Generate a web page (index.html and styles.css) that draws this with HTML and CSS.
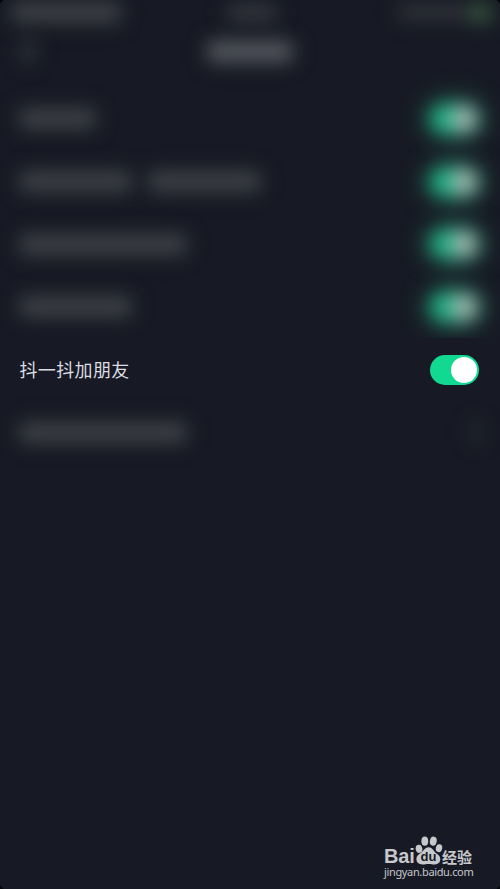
FILE: index.html
```html
<!DOCTYPE html>
<html lang="zh-CN">
<head>
<meta charset="utf-8">
<title>抖一抖加朋友</title>
<link rel="stylesheet" href="styles.css">
</head>
<body>
<main class="screen">
  <header class="status soft">
    <i class="smudge status-left"></i>
    <i class="smudge status-time"></i>
    <span class="status-right"><i class="smudge status-icons"></i><i class="smudge battery"></i></span>
  </header>
  <nav class="nav soft">
    <i class="smudge back"></i>
    <i class="smudge title"></i>
    <i class="back"></i>
  </nav>
  <section class="settings">
    <div class="row soft"><span class="label"><i class="smudge w-75"></i></span><span class="toggle"></span></div>
    <div class="row soft"><span class="label"><i class="smudge w-110"></i><i class="smudge w-110"></i></span><span class="toggle"></span></div>
    <div class="row soft"><span class="label"><i class="smudge w-165"></i></span><span class="toggle"></span></div>
    <div class="row soft"><span class="label"><i class="smudge w-110"></i></span><span class="toggle"></span></div>
    <div class="row focus"><span class="focus-label">抖一抖加朋友</span><span class="toggle"></span></div>
    <div class="row soft"><span class="label"><i class="smudge w-165"></i></span><i class="smudge chevron"></i></div>
  </section>
  <footer class="watermark">
    <div class="brand">
      <span class="bai">Bai</span>
      <span class="paw">
        <svg viewBox="0 0 28 29" width="28" height="29" aria-hidden="true">
          <ellipse cx="4" cy="12.8" rx="3.3" ry="4.1" transform="rotate(-12 4 12.8)"/>
          <ellipse cx="9.8" cy="5.2" rx="3.4" ry="4.6"/>
          <ellipse cx="18.3" cy="5.2" rx="3.4" ry="4.6" transform="rotate(10 18.3 5.2)"/>
          <ellipse cx="24" cy="12.2" rx="3.2" ry="4" transform="rotate(12 24 12.2)"/>
          <path d="M13.6 11.2c3.6 0 4.7 3.3 7 5.5 2.5 2 4.7 3.1 4.7 6.4 0 3.5-2.2 5.3-5.5 5.3-2.4 0-3.8-.5-6.2-.5s-3.8.5-6.2.5c-3.6 0-6-1.9-6-5.3 0-3.3 2.5-4.7 4.9-6.6 2.4-2 3.7-5.3 7.3-5.3z"/>
        </svg>
        <span class="du">du</span>
      </span>
      <span class="jy">经验</span>
    </div>
    <div class="url">jingyan.baidu.com</div>
  </footer>
</main>
</body>
</html>
```
FILE: styles.css
```css
* { box-sizing: border-box; }
body { margin: 0; background: #171a24; }
.screen {
  position: relative;
  display: flex;
  flex-direction: column;
  width: 500px;
  height: 889px;
  overflow: hidden;
  background: #171a24;
  font-family: "Noto Sans CJK SC", sans-serif;
}
.screen::after {
  content: "";
  position: absolute;
  inset: -10px;
  border-radius: 40px;
  box-shadow: 0 0 14px 12px #03070b;
  pointer-events: none;
}
.soft { filter: blur(9px); }
.smudge {
  display: block;
  height: 19px;
  border-radius: 3px;
  background: #3f4248;
  box-shadow: 0 0 16px 3px #3f424833;
}
.status {
  display: grid;
  grid-template-columns: 1fr 48px 1fr;
  align-items: center;
  height: 25px;
  padding: 0 8px 0 12px;
}
.status-left { width: 108px; }
.status-time { height: 14px; background: #373a41; }
.status-right { display: flex; justify-content: flex-end; gap: 3px; }
.status-icons { width: 66px; height: 14px; background: #303339; }
.battery { width: 24px; height: 16px; background: #36583f; }
.nav {
  display: flex;
  align-items: center;
  justify-content: space-between;
  height: 52px;
  padding: 0 22px;
}
.back { width: 12px; height: 20px; }
.smudge.back { background: #32363b; }
.title { width: 84px; height: 21px; background: #53565d; }
.settings { padding-top: 10.5px; }
.row {
  display: flex;
  align-items: center;
  justify-content: space-between;
  height: 62.7px;
  padding: 0 21px 0 20px;
}
.label { display: flex; gap: 18px; }
.w-75 { width: 75px; }
.w-110 { width: 111px; }
.w-165 { width: 166px; }
.toggle {
  display: flex;
  justify-content: flex-end;
  align-items: center;
  width: 49px;
  height: 30px;
  padding-right: 2px;
  border-radius: 15px;
  background: #12d992;
}
.toggle::before {
  content: "";
  width: 26px;
  height: 26px;
  border-radius: 50%;
  background: #fff;
}
.row.soft .toggle { background: #20b384; box-shadow: 0 0 18px 6px #2f9a7a66; }
.row.soft .toggle::before { background: #a3b3ae; }
.focus { position: relative; background: #171a24; }
.focus-label {
  margin: -2px 0 0 -.5px;
  color: #dcdde2;
  font-size: 18px;
  font-weight: 400;
  letter-spacing: .35px;
  line-height: 26px;
}
.chevron { width: 7px; height: 20px; background: #2a2d35; }
.watermark {
  display: flex;
  flex-direction: column;
  width: 90px;
  margin: auto 26px 10px auto;
  color: #c6c8cc;
}
.brand { display: flex; align-items: flex-end; height: 29px; }
.bai {
  width: 31px;
  font: 700 20px/18px "Liberation Sans", sans-serif;
  letter-spacing: -.2px;
}
.paw { position: relative; width: 27px; height: 29px; }
.paw svg { display: block; fill: #c6c8cc; }
.du {
  position: absolute;
  left: 0;
  bottom: 1px;
  width: 27px;
  color: #171a24;
  text-align: center;
  font: 700 13px/14px "Liberation Sans", sans-serif;
}
.jy { font-size: 15px; font-weight: 700; line-height: 15px; padding-bottom: 1px; white-space: nowrap; }
.url {
  font: 11px/14px "Noto Sans", sans-serif;
  letter-spacing: -.35px;
  white-space: nowrap;
}
```
